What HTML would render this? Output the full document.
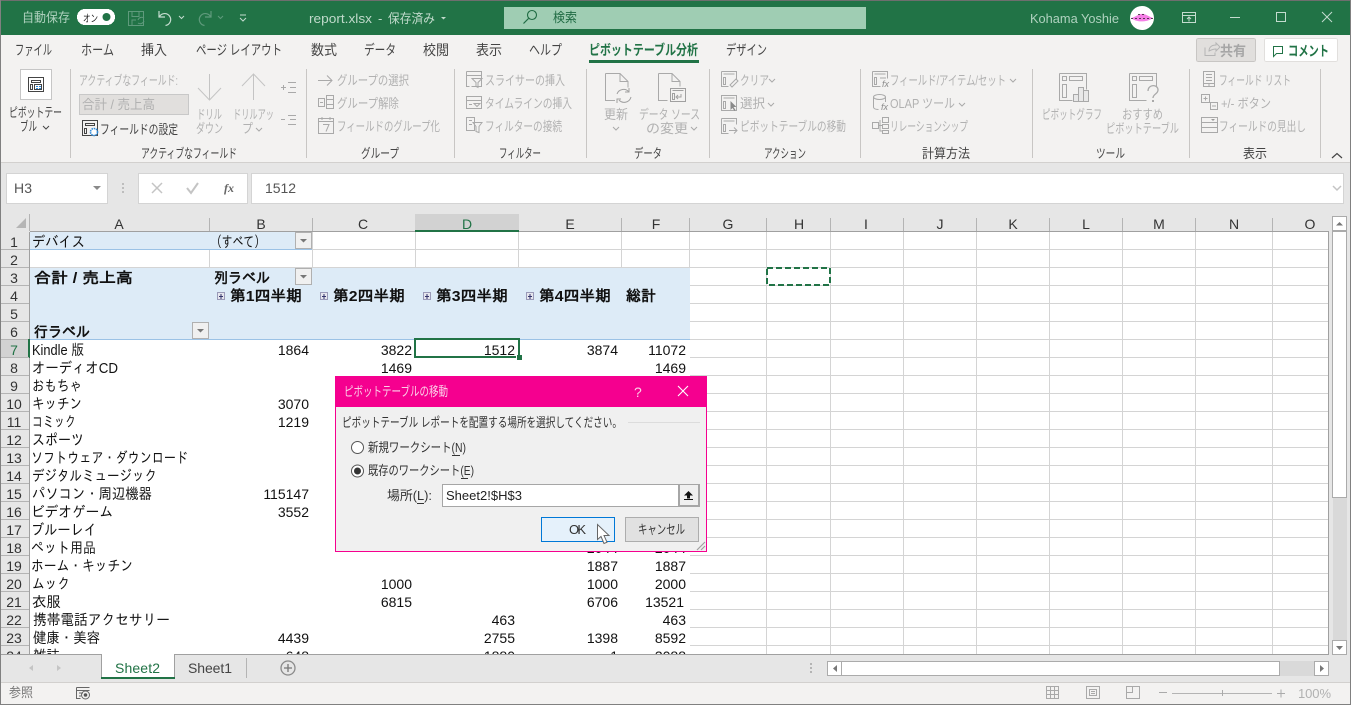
<!DOCTYPE html>
<html lang="ja"><head><meta charset="utf-8"><title>report.xlsx</title>
<style>
html,body{margin:0;padding:0;background:#e6e6e6;overflow:hidden}
svg{display:block}
text{white-space:pre}
.u{font:13px "Liberation Sans","Noto Sans CJK JP",sans-serif}
.t{font:14px "Liberation Sans","Noto Sans CJK JP",sans-serif;fill:#444}
.r{font:13px "Liberation Sans","Noto Sans CJK JP",sans-serif;fill:#444}
.d{font:13px "Liberation Sans","Noto Sans CJK JP",sans-serif;fill:#b1b1b1}
.g{font:13px "Liberation Sans","Noto Sans CJK JP",sans-serif;fill:#444}
.c{font:15px "Liberation Sans","IPAGothic",sans-serif;fill:#111}
.n{font:14px "Liberation Sans",sans-serif;fill:#111;text-anchor:end}
.b{font:bold 15px "Liberation Sans","IPAGothic",sans-serif;fill:#111}
.h{font:14px "Liberation Sans",sans-serif;fill:#333;text-anchor:middle}
.w{font:13px "Liberation Sans","Noto Sans CJK JP",sans-serif;fill:#333}
.ic{fill:none;stroke:#a9a9a9;stroke-width:1}
.ik{fill:none;stroke:#444;stroke-width:1}
rect{shape-rendering:crispEdges}
</style></head><body>
<svg xmlns="http://www.w3.org/2000/svg" width="1351" height="705" viewBox="0 0 1351 705">
<rect width="1351" height="705" fill="#e6e6e6"/>
<!-- title bar -->
<rect x="0" y="1" width="1351" height="34" fill="#217346"/>
<text class="u" fill="#b0d2bf" x="22" y="22" textLength="48" lengthAdjust="spacingAndGlyphs">自動保存</text>
<rect x="77" y="9" width="38" height="16" rx="8" fill="#fff"/>
<text class="u" style="font-size:10px" fill="#222" x="83" y="22" textLength="15" lengthAdjust="spacingAndGlyphs">オン</text>
<circle cx="106.500" cy="17" r="4" fill="#217346"/>
<path d="M128.500 11.500h15v14h-15zM132 11.500v5h7v-5M132 25v-5h4" fill="none" stroke="#5f9a7c"/>
<path d="M138 20a4 4 0 0 1 6-2M144 21a4 4 0 0 1-6 2" fill="none" stroke="#5f9a7c"/>
<path d="M159 11v6h6M159.500 16.500a6 6 0 1 1 6 9" fill="none" stroke="#c4dccf" stroke-width="1.200"/>
<path d="M179 16l2.500 2.500 2.500-2.500" fill="none" stroke="#c4dccf"/>
<path d="M211 11v6h-6M210.500 16.500a6 6 0 1 0-6 9" fill="none" stroke="#5f9a7c" stroke-width="1.200"/>
<path d="M218 16l2.500 2.500 2.500-2.500" fill="none" stroke="#5f9a7c"/>
<path d="M240 15h6M240 18l3 3 3-3" fill="none" stroke="#c4dccf"/>
<text class="u" fill="#c0dacb" x="309" y="23" textLength="63" lengthAdjust="spacingAndGlyphs">report.xlsx</text>
<text class="u" fill="#c0dacb" x="378" y="23">-</text>
<text class="u" fill="#c0dacb" x="388" y="23" textLength="47" lengthAdjust="spacingAndGlyphs">保存済み</text>
<path d="M441 17h5l-2.500 2.500z" fill="#c0dacb"/>
<rect x="504" y="7" width="362" height="22" fill="#9fcdb3"/>
<circle cx="532" cy="15" r="4.500" fill="none" stroke="#1f6b43" stroke-width="1.100"/>
<path d="M528.500 18.500l-5 5" stroke="#1f6b43" stroke-width="1.200"/>
<text class="u" fill="#1f6b43" x="553" y="22" textLength="24" lengthAdjust="spacingAndGlyphs">検索</text>
<text class="u" fill="#b0d2bf" x="1030" y="23" textLength="89" lengthAdjust="spacingAndGlyphs">Kohama Yoshie</text>
<circle cx="1142" cy="18" r="12" fill="#fff"/>
<path d="M1131 18c5-1 8-5 13-4 3 1 6 3 9 4-5 4-16 5-22 0z" fill="#f57ee6"/>
<path d="M1131 18.500h22M1138 14.500h8" stroke="#222" stroke-width=".7" stroke-dasharray="2 2" fill="none"/>
<path d="M1182.500 12.500h13v10h-13zM1182.500 15.500h13M1189 21.500v-4M1187 19l2-2 2 2" fill="none" stroke="#c4dccf"/>
<rect x="1230" y="17" width="10" height="1" fill="#c4dccf"/>
<rect x="1276.500" y="12.500" width="9" height="9" fill="none" stroke="#c4dccf"/>
<path d="M1322 12l10 10M1332 12l-10 10" stroke="#c4dccf"/>
<!-- ribbon -->
<rect x="0" y="35" width="1351" height="127" fill="#f3f2f1"/>
<rect x="0" y="162" width="1351" height="1" fill="#d2d0ce"/>
<text class="t" x="15" y="55" textLength="37" lengthAdjust="spacingAndGlyphs">ファイル</text>
<text class="t" x="81" y="55" textLength="33" lengthAdjust="spacingAndGlyphs">ホーム</text>
<text class="t" x="141" y="55" textLength="26" lengthAdjust="spacingAndGlyphs">挿入</text>
<text class="t" x="196" y="55" textLength="86" lengthAdjust="spacingAndGlyphs">ページ レイアウト</text>
<text class="t" x="311" y="55" textLength="26" lengthAdjust="spacingAndGlyphs">数式</text>
<text class="t" x="364" y="55" textLength="32" lengthAdjust="spacingAndGlyphs">データ</text>
<text class="t" x="423" y="55" textLength="26" lengthAdjust="spacingAndGlyphs">校閲</text>
<text class="t" x="476" y="55" textLength="26" lengthAdjust="spacingAndGlyphs">表示</text>
<text class="t" x="529" y="55" textLength="33" lengthAdjust="spacingAndGlyphs">ヘルプ</text>
<text class="t" style="fill:#217346;font-weight:700" x="589" y="55" textLength="109" lengthAdjust="spacingAndGlyphs">ピボットテーブル分析</text>
<rect x="589" y="60" width="110" height="3" fill="#217346"/>
<text class="t" x="726" y="55" textLength="41" lengthAdjust="spacingAndGlyphs">デザイン</text>
<rect x="1196.500" y="38.500" width="59" height="23" rx="2" fill="#e1dfdd" stroke="#c8c6c4"/>
<path d="M1205 47.500v8h10v-3M1209 51c0-4 3-6 7-6v-2l4 4-4 4v-2c-3 0-5 1-7 2z" fill="none" stroke="#b5b5b5"/>
<text class="t" style="fill:#a6a6a6;font-weight:700" x="1220" y="56" textLength="26" lengthAdjust="spacingAndGlyphs">共有</text>
<rect x="1264.500" y="38.500" width="73" height="23" rx="2" fill="#fff" stroke="#e1dfdd"/>
<path d="M1273.500 46.500h9v7h-6l-3 3z" fill="none" stroke="#217346"/>
<text class="t" style="fill:#217346;font-weight:700" x="1288" y="56" textLength="41" lengthAdjust="spacingAndGlyphs">コメント</text>
<!-- separators -->
<g fill="#c8c6c4"><rect x="70" y="69" width="1" height="89"/><rect x="306" y="69" width="1" height="89"/><rect x="454" y="69" width="1" height="89"/><rect x="586" y="69" width="1" height="89"/><rect x="709" y="69" width="1" height="89"/><rect x="860" y="69" width="1" height="89"/><rect x="1032" y="69" width="1" height="89"/><rect x="1189" y="69" width="1" height="89"/><rect x="1320" y="69" width="1" height="89"/></g>
<!-- pivot table button -->
<rect x="20.500" y="69.500" width="31" height="30" fill="#fff" stroke="#c6c6c6"/>
<path d="M28.500 77.500h15v14h-15zM31.500 80.500h9v2h-9zM30.500 84.500h2v5h-2zM34.500 84.500h7v5h-7z" class="ik"/>
<g fill="#2b88d8"><rect x="36" y="86" width="2" height="1"/><rect x="39" y="86" width="2" height="1"/><rect x="36" y="88" width="2" height="1"/><rect x="39" y="88" width="2" height="1"/></g>
<text class="r" x="9" y="117" textLength="53" lengthAdjust="spacingAndGlyphs">ピボットテー</text>
<text class="r" x="20" y="131" textLength="17" lengthAdjust="spacingAndGlyphs">ブル</text>
<path d="M43 126l3 3 3-3" class="ik"/>
<!-- active field -->
<text class="d" x="79" y="85" textLength="99" lengthAdjust="spacingAndGlyphs">アクティブなフィールド:</text>
<rect x="79.500" y="94.500" width="109" height="20" fill="#e1dfdd" stroke="#c8c8c8"/>
<text class="d" x="82" y="109" textLength="73" lengthAdjust="spacingAndGlyphs">合計 / 売上高</text>
<path d="M82.500 120.500h15v15h-15zM85.500 123.500h9v2h-9zM84.500 128.500h2v5h-2z" class="ik"/>
<circle cx="94" cy="132" r="3.500" fill="#fff" stroke="#2b88d8" stroke-width="1.600" stroke-dasharray="1.500 .8"/>
<text class="r" x="100" y="134" textLength="78" lengthAdjust="spacingAndGlyphs">フィールドの設定</text>
<path d="M209.500 74v26M198 88l11.500 12L221 88M253.500 100V74M242 86l11.500-12L265 86" class="ic" style="stroke:#c4c4c4"/>
<text class="d" x="197" y="119" textLength="25" lengthAdjust="spacingAndGlyphs">ドリル</text>
<text class="d" x="196" y="133" textLength="27" lengthAdjust="spacingAndGlyphs">ダウン</text>
<text class="d" x="233" y="119" textLength="41" lengthAdjust="spacingAndGlyphs">ドリルアッ</text>
<text class="d" x="242" y="133" textLength="11" lengthAdjust="spacingAndGlyphs">プ</text>
<path d="M256 128l3 3 3-3" class="ic"/>
<path d="M281 87.500h5M283.500 85v5M288 82.500h8M290 87.500h6M288 92.500h8M281 119.500h4M288 115.500h8M290 119.500h6M288 124.500h8" class="ic"/>
<!-- group -->
<path d="M318 80.500h14M327 75.500l5 5-5 5" class="ic"/>
<text class="d" x="337" y="85" textLength="72" lengthAdjust="spacingAndGlyphs">グループの選択</text>
<path d="M318.500 98.500h6v8h-6zM320 102.500h3M326.500 95.500h7v13h-7zM326.500 99.500h7M326.500 104.500h7" class="ic"/>
<text class="d" x="337" y="108" textLength="62" lengthAdjust="spacingAndGlyphs">グループ解除</text>
<path d="M318.500 118.500h15v15h-15zM318.500 121.500h15M322 117v3M330 117v3M323 124.500h6l-3 7" class="ic"/>
<text class="d" x="337" y="131" textLength="103" lengthAdjust="spacingAndGlyphs">フィールドのグループ化</text>
<!-- filter -->
<path d="M466.500 71.500h15v15h-10M466.500 71.500v15h3M466.500 75.500h15M472 78.500h10l-4 4v5l-2-1v-4z" class="ic"/>
<text class="d" x="485" y="85" textLength="80" lengthAdjust="spacingAndGlyphs">スライサーの挿入</text>
<path d="M466.500 96.500h15v12h-15zM466.500 100.500h15M469 104.500h3M474 103.500h6l-3 3z" class="ic"/>
<text class="d" x="485" y="108" textLength="87" lengthAdjust="spacingAndGlyphs">タイムラインの挿入</text>
<path d="M466.500 117.500h8v13h-8zM469 120.500h3M469 124.500h3M473 122.500h9l-3 4v6l-3-1v-5z" class="ic"/>
<text class="d" x="485" y="131" textLength="77" lengthAdjust="spacingAndGlyphs">フィルターの接続</text>
<!-- data -->
<path d="M605.500 73.500H620l8 8v6M605.500 73.500v27H615M620 73.500v8h8" class="ic"/>
<path d="M617 94a7 7 0 0 1 12-2M631 97a7 7 0 0 1-12 3M629 88v4h-4M617 103v-4h4" class="ic" style="stroke:#a0a0a0"/>
<text class="d" x="604" y="119" textLength="24" lengthAdjust="spacingAndGlyphs">更新</text>
<path d="M613 127l3 3 3-3" class="ic"/>
<path d="M658.500 73.500H672l8 8v5M658.500 73.500v27h9M672 73.500v8h8" class="ic"/>
<path d="M670.500 88.500h15v13h-15zM672.500 90.500h11M672.500 93.500h2v6h-2zM681 94v3h-4M678 95l-2 2 2 2" class="ic" style="stroke:#a0a0a0"/>
<text class="d" x="639" y="119" textLength="61" lengthAdjust="spacingAndGlyphs">データ ソース</text>
<text class="d" x="646" y="133" textLength="42" lengthAdjust="spacingAndGlyphs">の変更</text>
<path d="M691 127l3 3 3-3" class="ic"/>
<!-- action -->
<path d="M721.500 71.500h15v8M721.500 71.500v15h7M723.500 74h11M723.500 77.500h2v7h-2zM736 79l-6 6 2 2 6-6z" class="ic"/>
<text class="d" x="740" y="85" textLength="29" lengthAdjust="spacingAndGlyphs">クリア</text>
<path d="M769 79l3 3 3-3" class="ic"/>
<path d="M721.500 95.500h15v15h-15zM723.500 98h11M723.500 101.500h2v7h-2z" class="ic"/>
<path d="M730.500 101v9l2-2 2 3 1-1-2-3h3z" fill="#8a8a8a"/>
<text class="d" x="740" y="108" textLength="25" lengthAdjust="spacingAndGlyphs">選択</text>
<path d="M768 103l3 3 3-3" class="ic"/>
<path d="M721.500 118.500h15v6M721.500 118.500v15h7M723.500 121h11M723.500 124.500h2v7h-2zM729 130.500h8M734 127.500l3 3-3 3" class="ic"/>
<text class="d" x="740" y="131" textLength="106" lengthAdjust="spacingAndGlyphs">ピボットテーブルの移動</text>
<!-- calc -->
<path d="M872.500 71.500h15v7M872.500 71.500v15h8M874.500 74h11M874.500 77.500h2v7h-2zM880 78h6" class="ic"/>
<text class="d" style="font-size:9px;font-style:italic;fill:#8a8a8a" x="882" y="87">fx</text>
<text class="d" x="890" y="85" textLength="116" lengthAdjust="spacingAndGlyphs">フィールド/アイテム/セット</text>
<path d="M1010 79l3 3 3-3" class="ic"/>
<ellipse cx="879.500" cy="97" rx="6" ry="2.500" class="ic"/>
<path d="M873.500 97v10c0 1.500 2 2.500 5 2.500M885.500 97v5" class="ic"/>
<text class="d" style="font-size:9px;font-style:italic;fill:#8a8a8a" x="881" y="110">fx</text>
<text class="d" x="890" y="108" textLength="65" lengthAdjust="spacingAndGlyphs">OLAP ツール</text>
<path d="M959 103l3 3 3-3" class="ic"/>
<path d="M872.500 122.500h6v6h-6zM882.500 117.500h6v5h-6zM882.500 124.500h6v4h-6zM882.500 130.500h6v3h-6zM878 125.500h4M880 120v11h2" class="ic"/>
<text class="d" x="890" y="131" textLength="78" lengthAdjust="spacingAndGlyphs">リレーションシップ</text>
<!-- tools -->
<path d="M1059.500 73.500h27v16M1059.500 73.500v27h13M1062.500 76.500h4v4h-4zM1069.500 76.500h13v4h-13zM1062.500 84.500h4v13h-4z" class="ic"/>
<path d="M1073.500 94.500h5v7h-5zM1078.500 87.500h5v14h-5zM1083.500 90.500h5v11h-5z" class="ic" style="fill:#e8e8e8"/>
<text class="d" x="1042" y="119" textLength="60" lengthAdjust="spacingAndGlyphs">ピボットグラフ</text>
<path d="M1129.500 73.500h27v13M1129.500 73.500v27h17M1132.500 76.500h4v4h-4zM1139.500 76.500h13v4h-13zM1132.500 84.500h4v13h-4z" class="ic"/>
<path d="M1148 91c0-7 10-7 10-1 0 4-5 4-5 8" class="ic" style="stroke-width:1.300"/>
<rect x="1152" y="100" width="2" height="2" fill="#a9a9a9"/>
<text class="d" x="1122" y="119" textLength="41" lengthAdjust="spacingAndGlyphs">おすすめ</text>
<text class="d" x="1106" y="133" textLength="73" lengthAdjust="spacingAndGlyphs">ピボットテーブル</text>
<!-- show -->
<path d="M1203.500 71.500h11v15h-11zM1206 74.500h6M1206 77.500h6M1206 80.500h6M1203.500 83.500h11M1209 83.500v3" class="ic"/>
<text class="d" x="1219" y="85" textLength="72" lengthAdjust="spacingAndGlyphs">フィールド リスト</text>
<path d="M1201.500 94.500h8v8h-8zM1210.500 102.500h7v7h-7zM1203.500 98.500h4M1205.500 96.500v4M1212 106h4" class="ic"/>
<text class="d" x="1221" y="108" textLength="50" lengthAdjust="spacingAndGlyphs">+/- ボタン</text>
<path d="M1201.500 117.500h16v15h-16zM1201.500 122.500h16M1201.500 127.500h16" class="ic"/>
<path d="M1211 119h4l-2 2z" fill="#999"/>
<text class="d" x="1219" y="131" textLength="87" lengthAdjust="spacingAndGlyphs">フィールドの見出し</text>
<!-- group labels -->
<text class="g" x="141" y="158" textLength="96" lengthAdjust="spacingAndGlyphs">アクティブなフィールド</text>
<text class="g" x="361" y="158" textLength="38" lengthAdjust="spacingAndGlyphs">グループ</text>
<text class="g" x="499" y="158" textLength="42" lengthAdjust="spacingAndGlyphs">フィルター</text>
<text class="g" x="634" y="158" textLength="28" lengthAdjust="spacingAndGlyphs">データ</text>
<text class="g" x="764" y="158" textLength="42" lengthAdjust="spacingAndGlyphs">アクション</text>
<text class="g" x="922" y="158" textLength="48" lengthAdjust="spacingAndGlyphs">計算方法</text>
<text class="g" x="1096" y="158" textLength="29" lengthAdjust="spacingAndGlyphs">ツール</text>
<text class="g" x="1243" y="158" textLength="24" lengthAdjust="spacingAndGlyphs">表示</text>
<path d="M1332 158l5-4.500 5 4.500" class="ik" style="stroke-width:1.200"/>
<!-- formula bar -->
<rect x="6.500" y="173.500" width="101" height="30" fill="#fff" stroke="#d4d4d4"/>
<text class="n" style="fill:#555;text-anchor:start" x="14" y="193" textLength="18">H3</text>
<path d="M93 186h8l-4 4z" fill="#8a8a8a"/>
<g fill="#bdbdbd"><rect x="122" y="183" width="2" height="2"/><rect x="122" y="187" width="2" height="2"/><rect x="122" y="191" width="2" height="2"/></g>
<rect x="138.500" y="173.500" width="109" height="30" fill="#fff" stroke="#d4d4d4"/>
<path d="M152 183l10 10M162 183l-10 10" stroke="#c4c4c4" stroke-width="1.500"/>
<path d="M187 188l4 5 7-10" fill="none" stroke="#c4c4c4" stroke-width="2"/>
<text style="font:italic bold 12px 'Liberation Serif',serif;fill:#666" x="224" y="192">fx</text>
<rect x="251.500" y="173.500" width="1092" height="30" fill="#fff" stroke="#d4d4d4"/>
<text class="n" style="fill:#555;text-anchor:start" x="265" y="193" textLength="31">1512</text>
<path d="M1333 186l4 4 4-4" fill="none" stroke="#c4c4c4" stroke-width="1.500"/>
<!-- sheet -->
<rect x="30" y="232" width="1298" height="422" fill="#fff"/>
<rect x="30" y="232" width="282" height="17" fill="#ddebf7"/>
<rect x="30" y="249" width="282" height="1" fill="#9bc2e6"/>
<rect x="30" y="268" width="660" height="71" fill="#ddebf7"/>
<rect x="30" y="339" width="660" height="1" fill="#9bc2e6"/>
<path d="M209.500 250v18M312.500 232v36M415.500 232v36M518.500 232v36M621.500 232v36M689.500 232v36M766.500 232v422M830.500 232v422M903.500 232v422M976.500 232v422M1049.500 232v422M1122.500 232v422M1195.500 232v422M1272.500 232v422M312 249.500h1016M30 267.500h1298M690 285.500h638M690 303.500h638M690 321.500h638M690 339.500h638M690 357.500h638M690 375.500h638M690 393.500h638M690 411.500h638M690 429.500h638M690 447.500h638M690 465.500h638M690 483.500h638M690 501.500h638M690 519.500h638M690 537.500h638M690 555.500h638M690 573.500h638M690 591.500h638M690 609.500h638M690 627.500h638M690 645.500h638" stroke="#d4d4d4" fill="none"/>
<rect x="1328" y="232" width="1" height="422" fill="#a0a0a0"/>
<!-- column headers -->
<rect x="1" y="214" width="1328" height="17" fill="#e6e6e6"/>
<rect x="415" y="214" width="104" height="16" fill="#d2d2d2"/>
<rect x="30" y="231" width="1299" height="1" fill="#a0a0a0"/>
<rect x="415" y="230" width="104" height="2" fill="#217346"/>
<path d="M29.500 214v17M209.500 218v13M312.500 218v13M621.500 218v13M689.500 218v13M766.500 218v13M830.500 218v13M903.500 218v13M976.500 218v13M1049.500 218v13M1122.500 218v13M1195.500 218v13M1272.500 218v13" stroke="#b4b4b4"/>
<path d="M16 228L26 218V228Z" fill="#b5b5b5"/>
<text class="h" x="119" y="229">A</text><text class="h" x="261" y="229">B</text><text class="h" x="363" y="229">C</text><text class="h" style="fill:#217346" x="467" y="229">D</text><text class="h" x="570" y="229">E</text><text class="h" x="656" y="229">F</text><text class="h" x="728" y="229">G</text><text class="h" x="799" y="229">H</text><text class="h" x="866" y="229">I</text><text class="h" x="940" y="229">J</text><text class="h" x="1013" y="229">K</text><text class="h" x="1086" y="229">L</text><text class="h" x="1159" y="229">M</text><text class="h" x="1234" y="229">N</text><text class="h" x="1310" y="229">O</text>
<!-- row headers -->
<rect x="1" y="232" width="28" height="422" fill="#e6e6e6"/>
<rect x="1" y="340" width="28" height="18" fill="#d2d2d2"/>
<rect x="29" y="232" width="1" height="108" fill="#a0a0a0"/><rect x="29" y="358" width="1" height="296" fill="#a0a0a0"/>
<rect x="28" y="339" width="2" height="19" fill="#217346"/>
<path d="M1 249.500h28M1 267.500h28M1 285.500h28M1 303.500h28M1 321.500h28M1 339.500h27M1 357.500h28M1 375.500h28M1 393.500h28M1 411.500h28M1 429.500h28M1 447.500h28M1 465.500h28M1 483.500h28M1 501.500h28M1 519.500h28M1 537.500h28M1 555.500h28M1 573.500h28M1 591.500h28M1 609.500h28M1 627.500h28M1 645.500h28" stroke="#b4b4b4"/>
<g>
<text class="h" x="14" y="247">1</text><text class="h" x="14" y="265">2</text><text class="h" x="14" y="283">3</text><text class="h" x="14" y="301">4</text><text class="h" x="14" y="319">5</text><text class="h" x="14" y="337">6</text><text class="h" style="fill:#217346" x="14" y="355">7</text><text class="h" x="14" y="373">8</text><text class="h" x="14" y="391">9</text><text class="h" x="14" y="409">10</text><text class="h" x="14" y="427">11</text><text class="h" x="14" y="445">12</text><text class="h" x="14" y="463">13</text><text class="h" x="14" y="481">14</text><text class="h" x="14" y="499">15</text><text class="h" x="14" y="517">16</text><text class="h" x="14" y="535">17</text><text class="h" x="14" y="553">18</text><text class="h" x="14" y="571">19</text><text class="h" x="14" y="589">20</text><text class="h" x="14" y="607">21</text><text class="h" x="14" y="625">22</text><text class="h" x="14" y="643">23</text><text class="h" x="14" y="661">24</text>
</g>
<!-- cells -->
<text class="c" x="32" y="247" textLength="53" lengthAdjust="spacingAndGlyphs">デバイス</text>
<text class="c" x="211" y="247" textLength="54" lengthAdjust="spacingAndGlyphs">（すべて）</text>
<text class="b" x="34" y="283" textLength="99" lengthAdjust="spacingAndGlyphs">合計 / 売上高</text>
<text class="b" x="214" y="283" textLength="56" lengthAdjust="spacingAndGlyphs">列ラベル</text>
<text class="b" x="230" y="301" textLength="72" lengthAdjust="spacingAndGlyphs">第1四半期</text>
<text class="b" x="333" y="301" textLength="72" lengthAdjust="spacingAndGlyphs">第2四半期</text>
<text class="b" x="436" y="301" textLength="72" lengthAdjust="spacingAndGlyphs">第3四半期</text>
<text class="b" x="539" y="301" textLength="72" lengthAdjust="spacingAndGlyphs">第4四半期</text>
<text class="b" x="626" y="301" textLength="30" lengthAdjust="spacingAndGlyphs">総計</text>
<text class="b" x="34" y="337" textLength="56" lengthAdjust="spacingAndGlyphs">行ラベル</text>
<g fill="#f0f0f0" stroke="#b0b0b0">
<rect x="295.500" y="232.500" width="16" height="16"/><rect x="295.500" y="268.500" width="16" height="16"/><rect x="192.500" y="322.500" width="16" height="16"/>
</g>
<path d="M300 239h7l-3.500 3.500zM300 275h7l-3.500 3.500zM197 329h7l-3.500 3.500z" fill="#777"/>
<g fill="#e6e6ee" stroke="#9a9ab8"><rect x="217.500" y="292.500" width="7" height="7"/><rect x="320.500" y="292.500" width="7" height="7"/><rect x="423.500" y="292.500" width="7" height="7"/><rect x="526.500" y="292.500" width="7" height="7"/></g>
<path d="M219 296.500h4M221 294v5M322 296.500h4M324 294v5M425 296.500h4M427 294v5M528 296.500h4M530 294v5" stroke="#33336a"/>
<text class="c" x="32" y="355" textLength="52" lengthAdjust="spacingAndGlyphs">Kindle 版</text>
<text class="c" x="32" y="373" textLength="86" lengthAdjust="spacingAndGlyphs">オーディオCD</text>
<text class="c" x="32" y="391" textLength="50" lengthAdjust="spacingAndGlyphs">おもちゃ</text>
<text class="c" x="32" y="409" textLength="50" lengthAdjust="spacingAndGlyphs">キッチン</text>
<text class="c" x="32" y="427" textLength="44" lengthAdjust="spacingAndGlyphs">コミック</text>
<text class="c" x="32" y="445" textLength="52" lengthAdjust="spacingAndGlyphs">スポーツ</text>
<text class="c" x="31" y="463" textLength="157" lengthAdjust="spacingAndGlyphs">ソフトウェア・ダウンロード</text>
<text class="c" x="32" y="481" textLength="125" lengthAdjust="spacingAndGlyphs">デジタルミュージック</text>
<text class="c" x="32" y="499" textLength="120" lengthAdjust="spacingAndGlyphs">パソコン・周辺機器</text>
<text class="c" x="31" y="517" textLength="82" lengthAdjust="spacingAndGlyphs">ビデオゲーム</text>
<text class="c" x="31" y="535" textLength="66" lengthAdjust="spacingAndGlyphs">ブルーレイ</text>
<text class="c" x="31" y="553" textLength="65" lengthAdjust="spacingAndGlyphs">ペット用品</text>
<text class="c" x="31" y="571" textLength="102" lengthAdjust="spacingAndGlyphs">ホーム・キッチン</text>
<text class="c" x="32" y="589" textLength="38" lengthAdjust="spacingAndGlyphs">ムック</text>
<text class="c" x="32" y="607" textLength="29" lengthAdjust="spacingAndGlyphs">衣服</text>
<text class="c" x="33" y="625" textLength="137" lengthAdjust="spacingAndGlyphs">携帯電話アクセサリー</text>
<text class="c" x="33" y="643" textLength="67" lengthAdjust="spacingAndGlyphs">健康・美容</text>
<text class="c" x="33" y="661" textLength="27" lengthAdjust="spacingAndGlyphs">雑誌</text>
<g>
<text class="n" x="309" y="355">1864</text><text class="n" x="412" y="355">3822</text><text class="n" x="515" y="355">1512</text><text class="n" x="618" y="355">3874</text><text class="n" x="686" y="355">11072</text>
<text class="n" x="412" y="373">1469</text><text class="n" x="686" y="373">1469</text>
<text class="n" x="309" y="409">3070</text><text class="n" x="309" y="427">1219</text><text class="n" x="309" y="499">115147</text><text class="n" x="309" y="517">3552</text>
<text class="n" x="618" y="553">2044</text><text class="n" x="686" y="553">2044</text>
<text class="n" x="618" y="571">1887</text><text class="n" x="686" y="571">1887</text>
<text class="n" x="412" y="589">1000</text><text class="n" x="618" y="589">1000</text><text class="n" x="686" y="589">2000</text>
<text class="n" x="412" y="607">6815</text><text class="n" x="618" y="607">6706</text><text class="n" x="684" y="607">13521</text>
<text class="n" x="515" y="625">463</text><text class="n" x="686" y="625">463</text>
<text class="n" x="309" y="643">4439</text><text class="n" x="515" y="643">2755</text><text class="n" x="618" y="643">1398</text><text class="n" x="686" y="643">8592</text>
<text class="n" x="309" y="661">648</text><text class="n" x="515" y="661">1880</text><text class="n" x="618" y="661">1</text><text class="n" x="686" y="661">3088</text>
</g>
<!-- selection -->
<rect x="415" y="339" width="104" height="18" fill="none" stroke="#217346" stroke-width="2"/>
<rect x="516" y="355" width="6" height="6" fill="#fff"/><rect x="517" y="355" width="5" height="5" fill="#217346"/>
<rect x="767" y="268" width="63" height="17" fill="none" stroke="#217346" stroke-width="2" stroke-dasharray="6 3"/>
<!-- dialog -->
<rect x="335" y="376" width="372" height="176" fill="#f5008f"/>
<rect x="336" y="407" width="370" height="144" fill="#f0f0f0"/>
<text class="u" fill="#fbd0e8" x="344" y="396" textLength="104" lengthAdjust="spacingAndGlyphs">ピボットテーブルの移動</text>
<text class="u" fill="#fbd0e8" style="font-size:14px" x="634" y="397">?</text>
<path d="M678 386l10 10M688 386l-10 10" stroke="#fff" stroke-width="1.100"/>
<text class="w" x="342" y="427" textLength="280" lengthAdjust="spacingAndGlyphs">ピボットテーブル レポートを配置する場所を選択してください。</text>
<rect x="628" y="422" width="72" height="1" fill="#dcdcdc"/>
<circle cx="357.500" cy="447.500" r="6" fill="#fff" stroke="#555"/>
<text class="w" x="368" y="452" textLength="98" lengthAdjust="spacingAndGlyphs">新規ワークシート(N)</text>
<rect x="452" y="455" width="8" height="1" fill="#333"/>
<circle cx="357.500" cy="471" r="6" fill="#fff" stroke="#555"/>
<circle cx="357.500" cy="471" r="3.500" fill="#333"/>
<text class="w" x="368" y="475" textLength="106" lengthAdjust="spacingAndGlyphs">既存のワークシート(E)</text>
<rect x="461" y="478" width="7" height="1" fill="#333"/>
<text class="w" x="387" y="500" textLength="45" lengthAdjust="spacingAndGlyphs">場所(L):</text>
<rect x="417" y="503" width="7" height="1" fill="#333"/>
<rect x="442.500" y="484.500" width="236" height="22" fill="#fff" stroke="#a6a6a6"/>
<text x="446" y="500" style="font:13px 'Liberation Sans',sans-serif;fill:#222" textLength="76">Sheet2!$H$3</text>
<rect x="679" y="484" width="21" height="23" fill="#a6a6a6"/>
<rect x="680" y="485" width="18" height="20" fill="#f0f0f0"/>
<path d="M688.500 491l4.500 4.500h-3v3h-3v-3h-3z" fill="#111"/><rect x="684" y="499" width="9" height="1" fill="#111"/>
<rect x="541.500" y="517.500" width="73" height="24" fill="#e5f1fb" stroke="#0078d7"/>
<text class="w" x="569" y="534" textLength="17">OK</text>
<rect x="625.500" y="517.500" width="73" height="24" fill="#e1e1e1" stroke="#adadad"/>
<text class="w" x="638" y="534" textLength="47" lengthAdjust="spacingAndGlyphs">キャンセル</text>
<path d="M597.500 524.500v15l3.500-3 3 7 3-1.300-3-6.700h5z" fill="#fff" stroke="#666"/>
<path d="M697 550l8-8M701 550l4-4" stroke="#a0a0a0" stroke-width="1.200"/>
<!-- scrollbars -->
<rect x="1329" y="214" width="21" height="440" fill="#e6e6e6"/>
<rect x="1333" y="232" width="14" height="408" fill="#d9d9d9"/>
<rect x="1332.500" y="216.500" width="14" height="14" fill="#fff" stroke="#ababab"/>
<path d="M1336 225.500h7l-3.500-3.500z" fill="#777"/>
<rect x="1332.500" y="231.500" width="14" height="266" fill="#fff" stroke="#ababab"/>
<rect x="1332.500" y="640.500" width="14" height="14" fill="#fff" stroke="#ababab"/>
<path d="M1336 646h7l-3.500 4z" fill="#777"/>
<!-- sheet tabs bar -->
<rect x="0" y="654" width="1351" height="28" fill="#e6e6e6"/>
<rect x="1" y="654" width="1328" height="1" fill="#a0a0a0"/>
<rect x="1332" y="654" width="15" height="1" fill="#ababab"/>
<path d="M33 665v6l-4-3zM57 665v6l4-3z" fill="#c4c4c4"/>
<rect x="101" y="654" width="74" height="25" fill="#fff"/>
<rect x="101" y="654" width="1" height="25" fill="#a0a0a0"/><rect x="174" y="654" width="1" height="25" fill="#a0a0a0"/>
<rect x="101" y="677" width="74" height="2" fill="#217346"/>
<text class="u" style="font-size:14px" fill="#217346" x="115" y="673" textLength="45">Sheet2</text>
<text class="u" style="font-size:14px" fill="#444" x="188" y="673" textLength="44">Sheet1</text>
<rect x="246" y="658" width="1" height="20" fill="#b4b4b4"/>
<circle cx="288" cy="668" r="7" fill="none" stroke="#8a8a8a" stroke-width="1.300"/>
<path d="M284 668h8M288 664v8" stroke="#777" stroke-width="1.300"/>
<g fill="#b4b4b4"><rect x="810" y="663" width="2" height="2"/><rect x="810" y="667" width="2" height="2"/><rect x="810" y="671" width="2" height="2"/></g>
<rect x="827" y="661" width="487" height="15" fill="#d9d9d9"/>
<rect x="827.500" y="661.500" width="14" height="14" fill="#fff" stroke="#ababab"/>
<path d="M837 665v7l-4-3.500z" fill="#777"/>
<rect x="841.500" y="661.500" width="438" height="14" fill="#fff" stroke="#ababab"/>
<rect x="1314.500" y="661.500" width="14" height="14" fill="#fff" stroke="#ababab"/>
<path d="M1320 665v7l4-3.500z" fill="#777"/>
<!-- status bar -->
<rect x="0" y="682" width="1351" height="22" fill="#f3f2f1"/>
<rect x="0" y="682" width="1351" height="1" fill="#d2d0ce"/>
<text class="u" fill="#777" x="9" y="697" textLength="24" lengthAdjust="spacingAndGlyphs">参照</text>
<path d="M76.500 687.500h13M76.500 687.500v11h4M76.500 690.500h13M79 693h4M79 696h2" fill="none" stroke="#666"/>
<circle cx="85.500" cy="695" r="4" fill="none" stroke="#666"/><circle cx="85.500" cy="695" r="1.800" fill="#555"/>
<path d="M1046.500 686.500h12v12h-12zM1050.500 686.500v12M1054.500 686.500v12M1046.500 690.500h12M1046.500 694.500h12" class="ic"/>
<path d="M1086.500 686.500h13v12h-13zM1089.500 689.500h7v6h-7zM1091 691.500h4M1091 693.500h4" class="ic"/>
<path d="M1126.500 686.500h13v12h-13zM1126.500 692.500h6v-6" class="ic"/>
<rect x="1159" y="692" width="8" height="1" fill="#aaa"/>
<rect x="1172" y="693" width="100" height="1" fill="#b4b4b4"/>
<rect x="1222" y="690" width="1" height="6" fill="#aaa"/>
<path d="M1277 693.500h8M1281 689.500v8" stroke="#aaa"/>
<text class="u" fill="#b1b1b1" x="1298" y="698" textLength="33">100%</text>
<!-- window frame -->
<rect x="0" y="0" width="1351" height="1" fill="#6e6e6e"/>
<rect x="0" y="0" width="1" height="705" fill="#808080"/>
<rect x="1350" y="0" width="1" height="705" fill="#808080"/>
<rect x="0" y="704" width="1351" height="1" fill="#808080"/>
</svg>
</body></html>
